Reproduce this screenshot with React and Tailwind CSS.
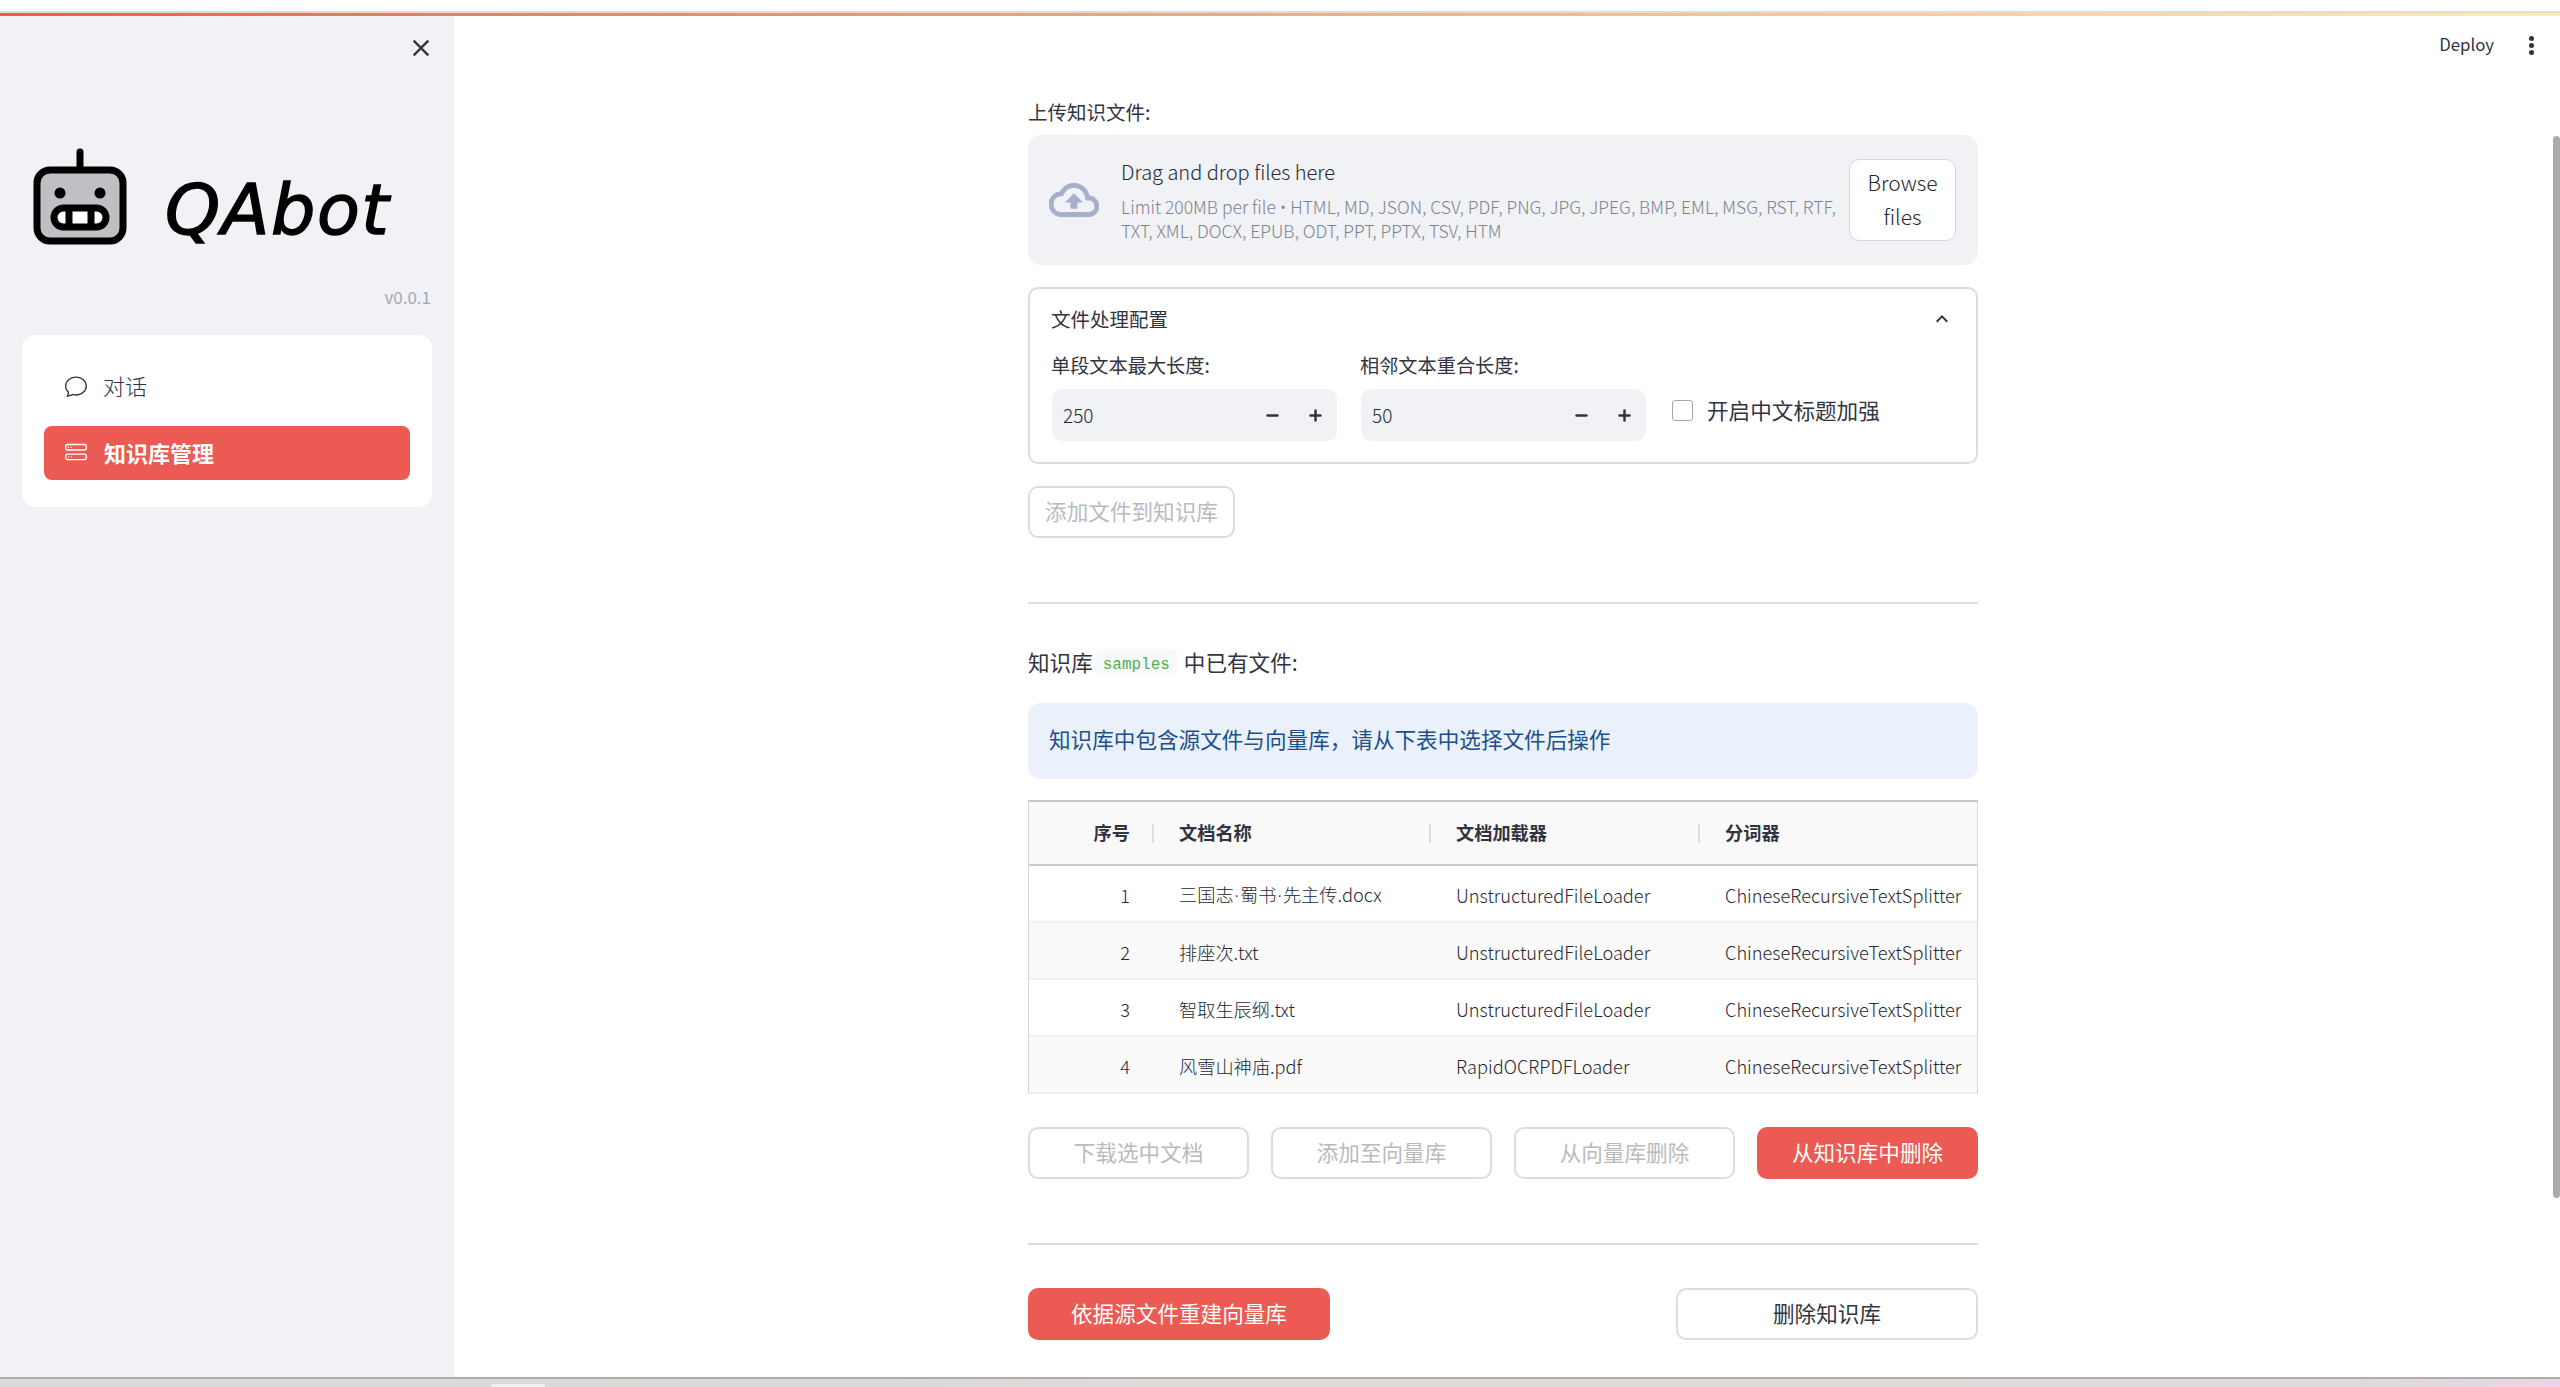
import React from "react";
import { BsChat, BsHddStack } from "react-icons/bs";
import { MdClose, MdKeyboardArrowUp } from "react-icons/md";
import { Minus, Plus } from "lucide-react";

function Dot() {
  return <span className="mx-[1px]" style={{ fontFamily: '"Noto Sans", sans-serif' }}>·</span>;
}

const rows = [
  ["1", <>三国志<Dot />蜀书<Dot />先主传.docx</>, "UnstructuredFileLoader"],
  ["2", "排座次.txt", "UnstructuredFileLoader"],
  ["3", "智取生辰纲.txt", "UnstructuredFileLoader"],
  ["4", "风雪山神庙.pdf", "RapidOCRPDFLoader"],
];

function RobotLogo() {
  return (
    <svg viewBox="0 0 94 97" className="w-[94px] h-[97px] shrink-0">
      <path d="M47 4 V20" stroke="#000" strokeWidth="7" strokeLinecap="round" fill="none" />
      <rect x="4" y="22" width="86" height="71" rx="13" fill="#bfc0c4" stroke="#000" strokeWidth="7" />
      <circle cx="27" cy="45" r="5.5" fill="#000" />
      <circle cx="67" cy="45" r="5.5" fill="#000" />
      <rect x="21" y="60" width="52" height="19" rx="9.5" fill="#fff" stroke="#000" strokeWidth="7" />
      <path d="M36 60 V79 M58 60 V79" stroke="#000" strokeWidth="7" />
    </svg>
  );
}

function CloudUpload() {
  return (
    <svg viewBox="0 0 24 24" className="w-[50px] h-[50px] text-[#a6b0c8] shrink-0" fill="currentColor" stroke="currentColor" strokeWidth="0.4">
      <path d="M19.35 10.04A7.49 7.49 0 0 0 12 4C9.11 4 6.6 5.64 5.35 8.04A5.994 5.994 0 0 0 0 14c0 3.31 2.69 6 6 6h13c2.76 0 5-2.24 5-5 0-2.64-2.05-4.78-4.65-4.96zM19 18H6c-2.21 0-4-1.79-4-4 0-2.05 1.53-3.76 3.56-3.97l1.07-.11.5-.95A5.469 5.469 0 0 1 12 6c2.62 0 4.88 1.86 5.39 4.43l.3 1.5 1.53.11A2.98 2.98 0 0 1 22 15c0 1.65-1.35 3-3 3zM8 13h2.55v3h2.9v-3H16l-4-4z" />
    </svg>
  );
}

function NumberInput({ value }) {
  return (
    <div className="ml-[1px] w-[285px] h-[52px] bg-[#f0f2f6] rounded-[10px] flex items-center pl-[11px] pr-[13px] text-[#31333f]">
      <span className="flex-1 text-[19px] font-light text-[#262730]">{value}</span>
      <Minus size={17} strokeWidth={3.5} className="mr-[26px]" />
      <Plus size={17} strokeWidth={3.5} />
    </div>
  );
}

function Btn({ children, className }) {
  return (
    <div className={"h-[52px] pb-[2px] rounded-[10px] flex items-center justify-center text-[21.6px] " + className}>
      {children}
    </div>
  );
}

export default function App() {
  return (
    <div
      className="w-[2560px] h-[1387px] overflow-hidden bg-white flex flex-col text-[#31333f] font-normal relative"
      style={{ fontFamily: '"Noto Sans CJK SC", "Noto Sans", sans-serif' }}
    >
      <div className="h-[11px] bg-white shrink-0" />
      <div className="h-[2px] bg-[#dcdcdc] shrink-0" />
      <div className="h-[3px] shrink-0 bg-gradient-to-r from-[#ef5a52] to-[#fff48f]" />
      <div className="flex flex-1 min-h-0">
        <aside className="w-[454px] shrink-0 bg-[#f0f2f6] flex flex-col">
          <div className="flex justify-end pt-[18px] pr-[19px] text-[#31333f]">
            <MdClose className="w-[28px] h-[28px]" />
          </div>
          <div className="flex items-center pl-[33px] mt-[86px] h-[97px]">
            <RobotLogo />
            <span
              className="ml-[38px] mt-[27px] text-[70px] leading-none text-black italic font-normal tracking-[1.5px] [-webkit-text-stroke:1.5px_black]"
              style={{ fontFamily: '"DejaVu Sans", sans-serif' }}
            >
              QAbot
            </span>
          </div>
          <div className="text-right pr-[23px] mt-[40px] text-[17px] leading-[24px] text-[#a3a8b8]">v0.0.1</div>
          <nav className="mx-[22px] mt-[26px] h-[172px] bg-white rounded-[13px] px-[22px] pt-[24px]">
            <div className="h-[53px] flex items-center pl-[21px] text-[22px] font-light">
              <BsChat className="w-[22px] h-[22px] mr-[16px]" />
              对话
            </div>
            <div className="h-[54px] pb-[2px] mt-[14px] flex items-center pl-[21px] bg-[#eb5a53] rounded-[8px] text-white text-[22px] font-bold">
              <BsHddStack className="w-[22px] h-[22px] mr-[17px]" />
              知识库管理
            </div>
          </nav>
        </aside>

        <main className="flex-1 flex min-w-0 relative">
          <div className="flex-1 flex justify-center">
            <div className="w-[950px] mr-[1px] flex flex-col">
              <div className="text-[19.5px] leading-[28px] mt-[82px]">上传知识文件:</div>
              <div className="mt-[9px] h-[130px] bg-[#f0f2f6] rounded-[13px] flex items-center pl-[21px] pr-[22px]">
                <CloudUpload />
                <div className="ml-[22px] flex-1 min-w-0 font-light">
                  <div className="text-[20px] leading-[30px] text-[#262730]">Drag and drop files here</div>
                  <div className="text-[17.5px] leading-[24px] text-[#7f828c] mt-[8px] w-[745px]">
                    Limit 200MB per file <span style={{ fontFamily: '"Noto Sans", sans-serif' }}>•</span> HTML, MD, JSON, CSV, PDF, PNG, JPG, JPEG, BMP, EML, MSG, RST, RTF, TXT, XML, DOCX, EPUB, ODT, PPT, PPTX, TSV, HTM
                  </div>
                </div>
                <div className="w-[107px] h-[82px] shrink-0 bg-white border border-[#d5d6da] rounded-[10px] flex items-center justify-center text-center text-[21px] leading-[34px] pb-[3px] font-light text-[#262730]">
                  Browse<br />files
                </div>
              </div>

              <div className="mt-[22px] h-[177px] border-2 border-[#dcdde1] rounded-[10px] px-[21px]">
                <div className="flex items-center justify-between mt-[16px] h-[28px]">
                  <span className="text-[19.5px]">文件处理配置</span>
                  <MdKeyboardArrowUp className="w-[24px] h-[24px] mr-[1px]" />
                </div>
                <div className="flex mt-[18px] gap-[23px]">
                  <div>
                    <div className="text-[19.2px] leading-[28px] mb-[10px]">单段文本最大长度:</div>
                    <NumberInput value="250" />
                  </div>
                  <div>
                    <div className="text-[19.2px] leading-[28px] mb-[10px]">相邻文本重合长度:</div>
                    <NumberInput value="50" />
                  </div>
                  <div className="flex items-center self-start ml-[3px] mt-[47px] h-[24px]">
                    <div className="w-[21px] h-[21px] border border-[#a3a8b8] rounded-[3px] bg-white" />
                    <span className="ml-[14px] text-[21.6px]">开启中文标题加强</span>
                  </div>
                </div>
              </div>

              <Btn className="mt-[22px] w-[207px] border-2 border-[#dcdde1] text-[#b9babf]">添加文件到知识库</Btn>

              <div className="mt-[64px] h-[2px] bg-[#dcdde1]" />

              <div className="mt-[44px] h-[28px] flex items-center text-[21.6px]">
                知识库
                <code
                  className="ml-[3px] mr-[7px] w-[81px] h-[26px] pt-[5px] flex items-center justify-center bg-[#f8f9fa] rounded-[5px] text-[#4fae4f] text-[16px]"
                  style={{ fontFamily: '"Liberation Mono", monospace' }}
                >
                  samples
                </code>
                中已有文件:
              </div>

              <div className="mt-[27px] h-[76px] pb-[3px] bg-[#eaf1fb] rounded-[13px] flex items-center pl-[21px] text-[21.6px] text-[#1c4f8c]">
                {"知识库中包含源文件与向量库\uFF0C请从下表中选择文件后操作"}
              </div>

              <div className="mt-[21px] h-[294px] border-x border-t-2 border-x-[#d5d6da] border-t-[#c4c5c9] overflow-hidden">
                <div className="h-[64px] flex items-center bg-[#f9f9f9] border-b-2 border-[#c9cacd] text-[18.2px] font-bold text-[#31333f]">
                  <div className="w-[125px] text-right pr-[22px] border-r-2 border-[#dcdde1] h-[19px] flex items-center justify-end">序号</div>
                  <div className="w-[277px] pl-[25px] border-r-2 border-[#dcdde1] h-[19px] flex items-center">文档名称</div>
                  <div className="w-[269px] pl-[25px] border-r-2 border-[#dcdde1] h-[19px] flex items-center">文档加载器</div>
                  <div className="pl-[25px]">分词器</div>
                </div>
                {rows.map((r, i) => (
                  <div
                    key={r[0]}
                    className={
                      "h-[57px] pt-[4px] flex items-center border-b-2 border-[#f0f0f2] text-[18.2px] " +
                      (i % 2 ? "bg-[#fafafb]" : "bg-white")
                    }
                  >
                    <div className="w-[125px] text-right pr-[24px] font-light text-[#262730]">{r[0]}</div>
                    <div className="w-[277px] pl-[25px] font-light text-[#262730]">{r[1]}</div>
                    <div className="w-[269px] pl-[25px] font-light text-[#262730]">{r[2]}</div>
                    <div className="pl-[25px] whitespace-nowrap font-light text-[#262730]">ChineseRecursiveTextSplitter</div>
                  </div>
                ))}
              </div>

              <div className="mt-[33px] grid grid-cols-4 gap-[22px]">
                <Btn className="border-2 border-[#dcdde1] text-[#b9babf]">下载选中文档</Btn>
                <Btn className="border-2 border-[#dcdde1] text-[#b9babf]">添加至向量库</Btn>
                <Btn className="border-2 border-[#dcdde1] text-[#b9babf]">从向量库删除</Btn>
                <Btn className="bg-[#eb5a53] text-white">从知识库中删除</Btn>
              </div>

              <div className="mt-[64px] h-[2px] bg-[#dcdde1]" />

              <div className="mt-[43px] flex justify-between">
                <Btn className="w-[302px] bg-[#eb5a53] text-white">依据源文件重建向量库</Btn>
                <Btn className="w-[302px] border-2 border-[#dcdde1]">删除知识库</Btn>
              </div>
            </div>
          </div>
          <div className="w-[7px] shrink-0 flex flex-col pt-[120px]">
            <div className="h-[1062px] bg-[#acacb0] rounded-[4px]" />
          </div>
          <div className="absolute top-[15px] right-[66px] text-[16.8px] leading-[26px] text-[#31333f]">Deploy</div>
          <div className="absolute top-[20px] right-[26px] flex flex-col gap-[2px]">
            <span className="w-[5px] h-[5px] rounded-full bg-[#31333f]" />
            <span className="w-[5px] h-[5px] rounded-full bg-[#31333f]" />
            <span className="w-[5px] h-[5px] rounded-full bg-[#31333f]" />
          </div>
        </main>
      </div>
      <div className="h-[10px] shrink-0 bg-gradient-to-r from-[#dcdad8] via-[#dedad9] via-92% to-[#e9d5e6] border-t-2 border-[#b0afac] flex">
        <div className="ml-[491px] mt-[5px] w-[54px] h-[3px] bg-[#f2f0ee] rounded-t-[4px]" />
      </div>
    </div>
  );
}
